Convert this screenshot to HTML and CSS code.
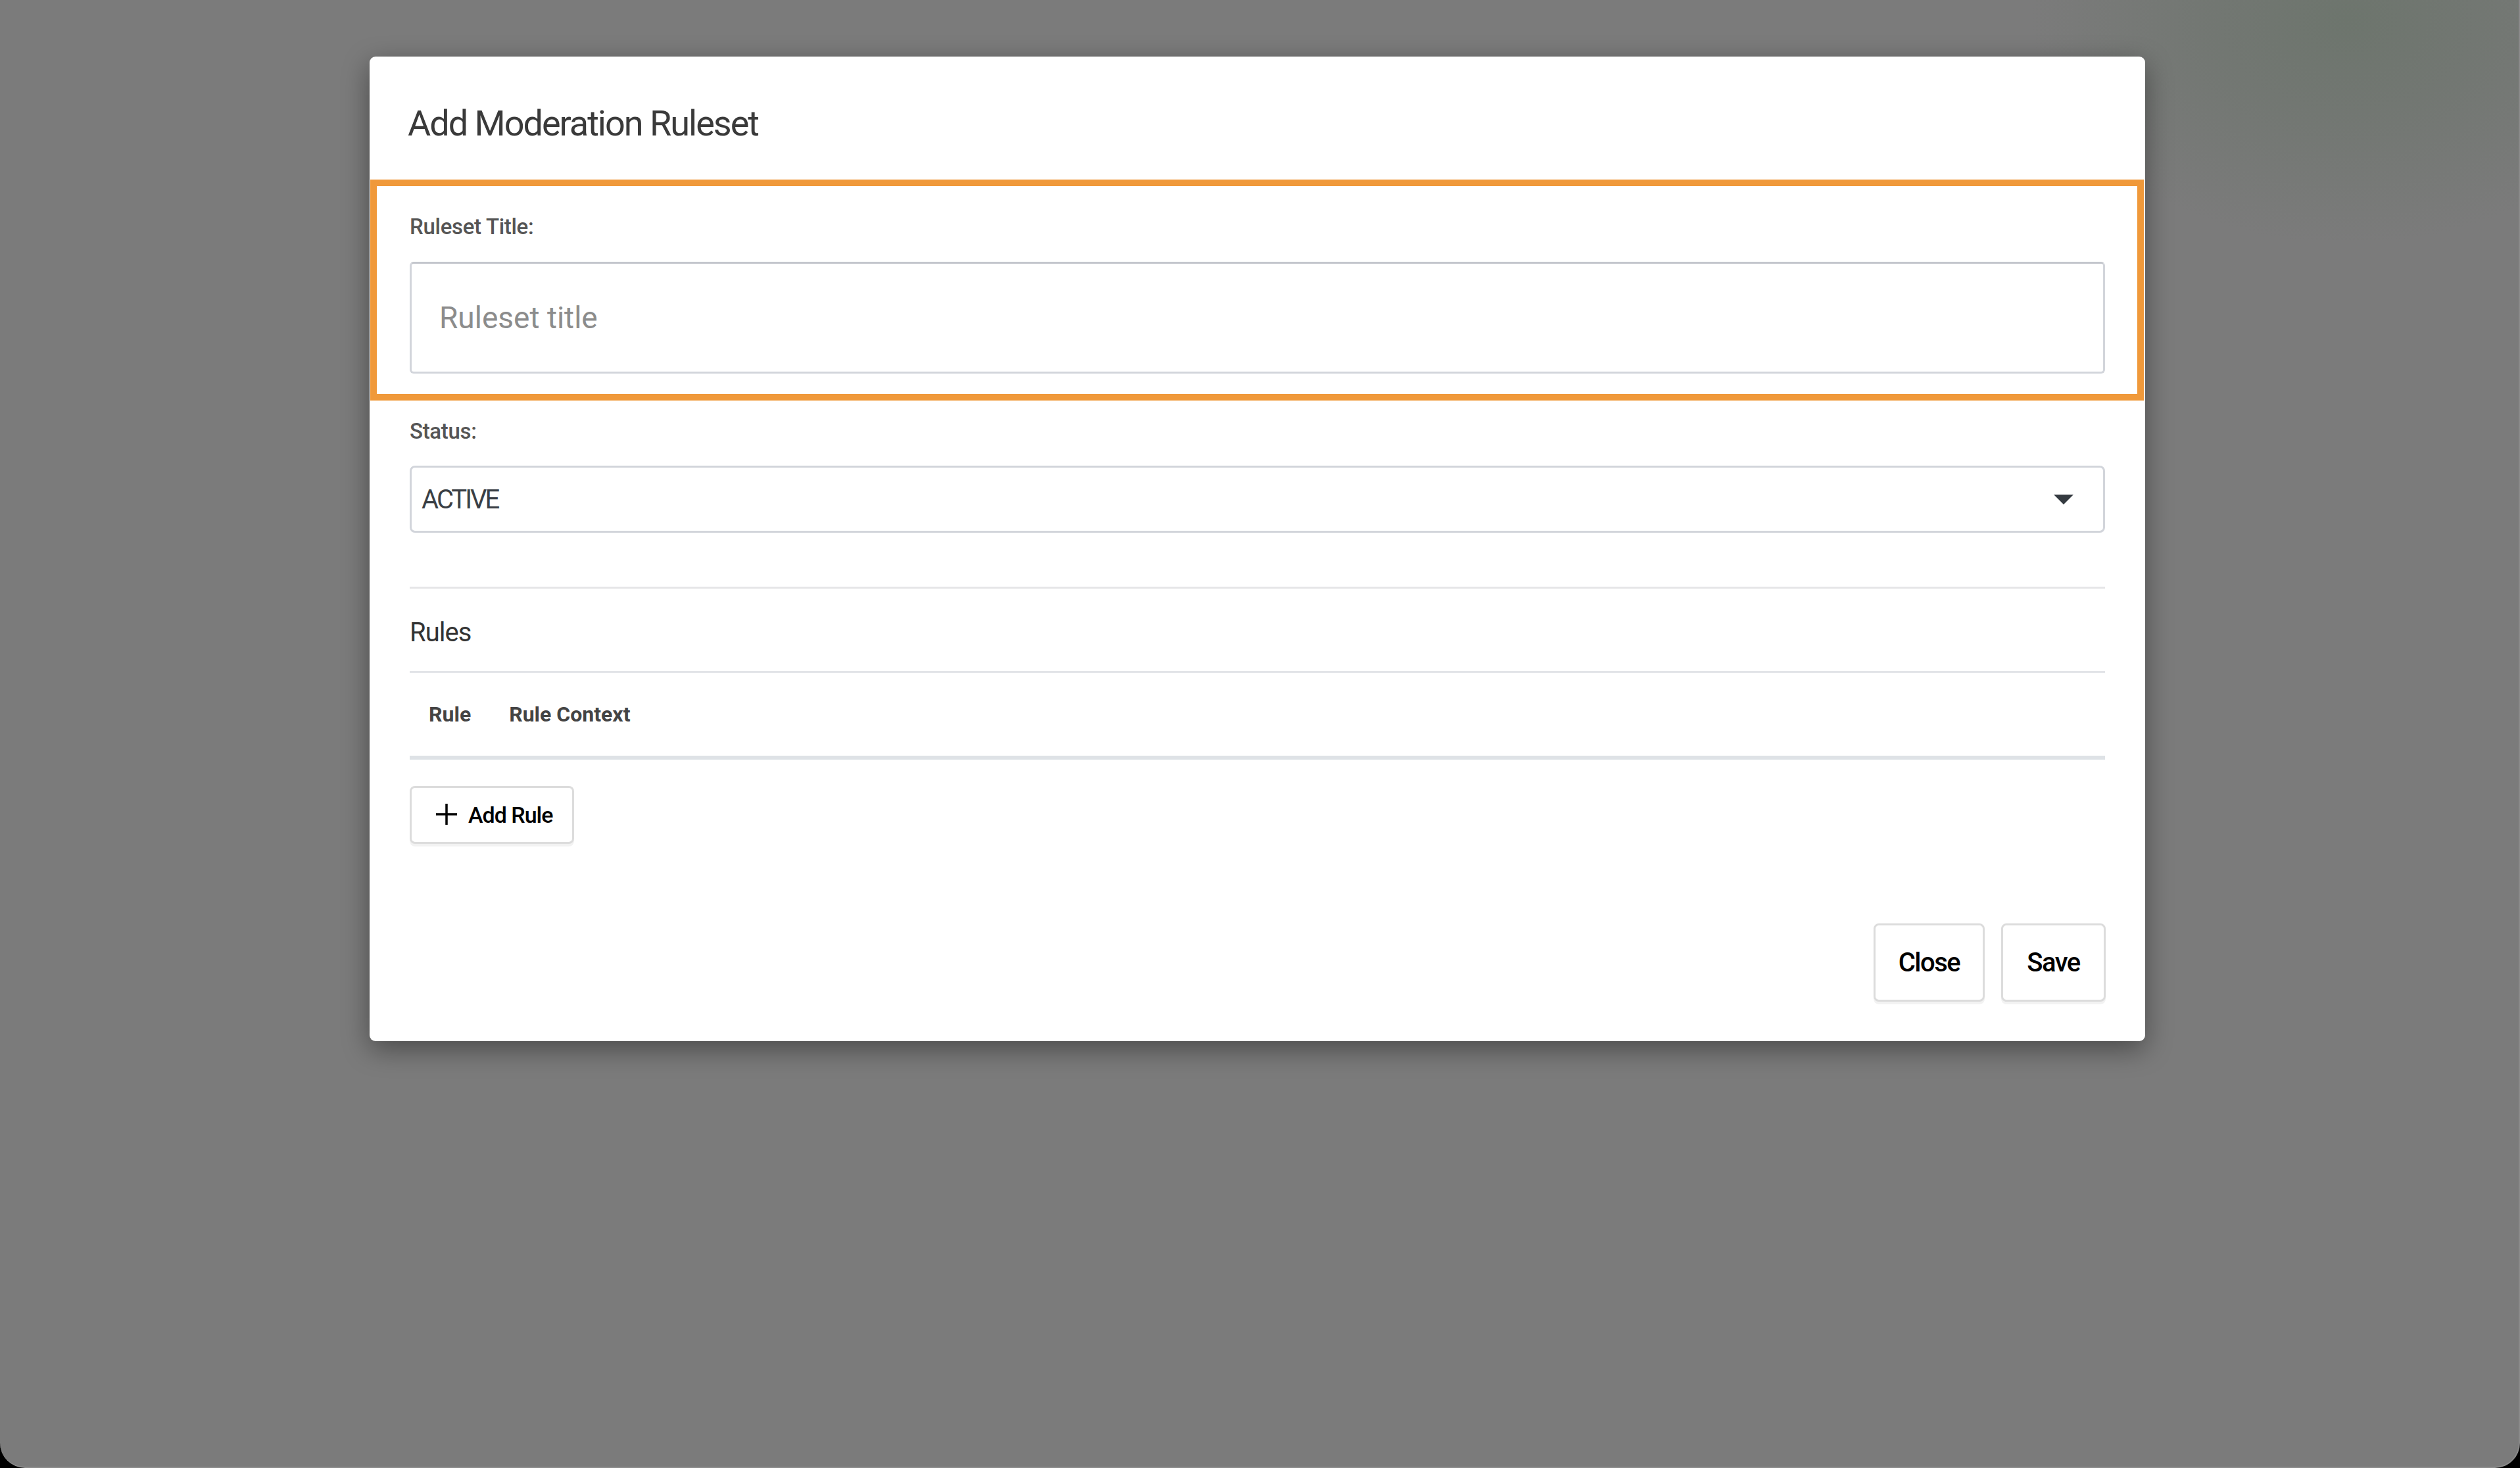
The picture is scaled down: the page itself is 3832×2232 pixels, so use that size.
FILE: index.html
```html
<!DOCTYPE html>
<html lang="en">
<head>
    <meta charset="UTF-8">
    <meta name="viewport" content="width=device-width, initial-scale=1.0">
    <title>Add Moderation Ruleset</title>
    <link rel="stylesheet" href="styles.css">
</head>
<body>

    <div class="screen">
        <div class="modal">
            <div class="modal-header">
                <h4 class="modal-title">Add Moderation Ruleset</h4>
            </div>

            <div class="modal-body">
                <div class="form-group highlight">
                    <label for="rulesetTitle">Ruleset Title:</label>
                    <input type="text" id="rulesetTitle" name="rulesetTitle" placeholder="Ruleset title">
                </div>

                <div class="form-group status-group">
                    <label for="status">Status:</label>
                    <div class="select" id="status">
                        <span>ACTIVE</span>
                        <span class="caret"></span>
                    </div>
                </div>

                <hr class="divider">

                <h5 class="section-title">Rules</h5>

                <table class="rules-table">
                    <thead>
                        <tr>
                            <th>Rule</th>
                            <th>Rule Context</th>
                            <th class="fill"></th>
                        </tr>
                    </thead>
                </table>

                <button type="button" class="btn btn-add">
                    <svg class="plus" viewBox="0 0 34 34" width="34" height="34">
                        <path d="M17 1 V33 M1 17 H33" stroke="#000" stroke-width="3.5" fill="none"/>
                    </svg>
                    <span>Add Rule</span>
                </button>
            </div>

            <div class="modal-footer">
                <button type="button" class="btn btn-close">Close</button>
                <button type="button" class="btn btn-save">Save</button>
            </div>
        </div>
    </div>

</body>
</html>
```

FILE: styles.css
```css
html, body {
    margin: 0;
    padding: 0;
    background-color: #000;
    font-family: Roboto, "Liberation Sans", sans-serif;
    overflow: hidden;
}
.screen {
    height: 2232px;
    box-sizing: border-box;
    padding: 86px 0 0 562px;
    border-radius: 0 0 38px 38px;
    border-right: 2px solid #8a8a8a;
    border-bottom: 2px solid #8c8c8c;
    background-color: #7b7b7b;
    background-image: radial-gradient(ellipse 480px 340px at 3570px 30px, #6d756d 0%, rgba(110, 117, 110, 0.65) 45%, rgba(123, 123, 123, 0) 100%);
}
.modal {
    width: 2700px;
    background-color: #fff;
    border-radius: 9px;
    box-shadow: 0 12px 40px rgba(0, 0, 0, 0.4);
}
.modal-header {
    padding: 72px 60px 55px 58px;
}
.modal-title {
    margin: 0;
    font-size: 54px;
    line-height: 60px;
    font-weight: 400;
    color: #3a3a3a;
    letter-spacing: -2px;
}
.modal-body {
    padding: 0 61px;
}
.form-group label {
    display: block;
    font-size: 33px;
    line-height: 40px;
    font-weight: 500;
    color: #555;
    margin-bottom: 33px;
    letter-spacing: -0.3px;
}
.highlight {
    margin: 0 -59px 0 -60px;
    padding: 42px 49px 31px 50px;
    border: 10px solid #f0993a;
}
.highlight input {
    display: block;
    width: 100%;
    height: 170px;
    box-sizing: border-box;
    padding: 0 42px;
    border: 3px solid #d2d5db;
    border-top-color: #c3c6cc;
    border-radius: 6px;
    font-family: inherit;
    font-size: 46px;
    color: #333;
    outline: none;
}
.highlight input::placeholder {
    color: #8c8c8c;
}
.status-group {
    margin-top: 27px;
}
.status-group label {
    margin-bottom: 32px;
}
.select {
    height: 102px;
    box-sizing: border-box;
    border: 3px solid #d2d5db;
    border-radius: 8px;
    padding: 0 45px 0 15px;
    display: flex;
    align-items: center;
    justify-content: space-between;
    font-size: 40px;
    color: #3a3f45;
    letter-spacing: -3px;
}
.caret {
    width: 0;
    height: 0;
    border-left: 15px solid transparent;
    border-right: 15px solid transparent;
    border-top: 15px solid #343a40;
}
.divider {
    margin: 82px 0 0 0;
    border: none;
    height: 3px;
    background-color: #e6e6e8;
}
.section-title {
    margin: 43px 0 0 0;
    padding-bottom: 34px;
    border-bottom: 3px solid #e2e4e8;
    font-size: 40px;
    line-height: 48px;
    font-weight: 400;
    color: #333;
    letter-spacing: -1px;
}
.rules-table {
    width: 100%;
    border-collapse: collapse;
}
.rules-table th {
    height: 126px;
    padding: 0 29px;
    text-align: left;
    vertical-align: middle;
    font-size: 32px;
    font-weight: 700;
    color: #444;
    white-space: nowrap;
    border-bottom: 6px solid #dee2e6;
}
.rules-table th.fill {
    width: 100%;
}
.btn {
    font-family: inherit;
    background-color: #fff;
    border: 3px solid #dcdcdc;
    border-radius: 8px;
    box-shadow: 0 4px 0 rgba(0, 0, 0, 0.05);
    color: #000;
    cursor: pointer;
}
.btn-add {
    margin-top: 40px;
    width: 250px;
    height: 88px;
    padding: 0 0 0 36px;
    display: flex;
    align-items: center;
    gap: 16px;
    font-size: 34px;
    font-weight: 500;
    letter-spacing: -1px;
}
.plus {
    display: block;
    margin-top: -2px;
}
.modal-footer {
    display: flex;
    justify-content: flex-end;
    gap: 25px;
    padding: 121px 60px 60px 0;
}
.btn-close,
.btn-save {
    height: 119px;
    font-size: 40px;
    font-weight: 500;
    letter-spacing: -1.5px;
}
.btn-close {
    width: 169px;
}
.btn-save {
    width: 159px;
}
```
